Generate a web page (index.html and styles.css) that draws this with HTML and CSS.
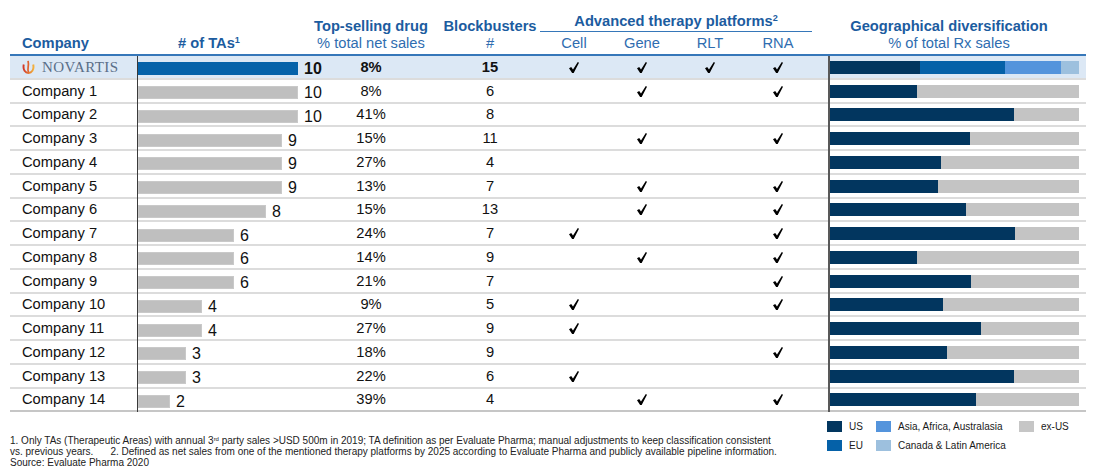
FILE: index.html
```html
<!DOCTYPE html>
<html>
<head>
<meta charset="utf-8">
<link rel="stylesheet" href="styles.css">
</head>
<body>
<div class="page">
  <div class="head cols">
    <div class="h h-company"><b>Company</b></div>
    <div class="h h-tas"><b># of TAs<sup class="sup">1</sup></b></div>
    <div class="h h-ctr"><b>Top-selling drug</b><span>% total net sales</span></div>
    <div class="h"></div>
    <div class="h h-ctr"><b>Blockbusters</b><span>#</span></div>
    <div class="h h-group">
      <b class="group-title">Advanced therapy platforms<sup class="sup">2</sup></b>
      <div class="group-cols"><span>Cell</span><span>Gene</span><span>RLT</span><span>RNA</span></div>
    </div>
    <div class="h"></div>
    <div class="h h-ctr h-geo"><b>Geographical diversification</b><span>% of total Rx sales</span></div>
  </div>

  <div class="row cols nvs">
    <div class="c name">
      <svg class="flame" viewBox="0 0 12 13" width="13" height="14">
        <defs><linearGradient id="fg" x1="0" y1="0" x2="1" y2="0"><stop offset="0" stop-color="#d23a2a"/><stop offset="1" stop-color="#f3b03c"/></linearGradient></defs>
        <path d="M1.6,4.2 C0.6,9.4 3.1,12 6,12 C8.9,12 11.4,9.4 10.4,4.2" fill="none" stroke="url(#fg)" stroke-width="1.8"/>
        <path d="M6,11.2 C4.3,8.2 6.9,6 5.6,0.8" fill="none" stroke="#e0612e" stroke-width="1.6"/>
      </svg>
      <span class="nvs-word">NOVARTIS</span>
    </div>
    <div class="c tas"><span class="bar" style="width:160px"></span><span class="num">10</span></div>
    <div class="c ctr">8%</div><div class="c"></div>
    <div class="c ctr">15</div>
    <div class="c ctr"><svg class="chk" viewBox="0 0 10 11"><polygon points="0,6.3 2.2,4.9 4,7.6 8.8,0 10,0.8 4.7,11 3.1,11"/></svg></div>
    <div class="c ctr"><svg class="chk" viewBox="0 0 10 11"><polygon points="0,6.3 2.2,4.9 4,7.6 8.8,0 10,0.8 4.7,11 3.1,11"/></svg></div>
    <div class="c ctr"><svg class="chk" viewBox="0 0 10 11"><polygon points="0,6.3 2.2,4.9 4,7.6 8.8,0 10,0.8 4.7,11 3.1,11"/></svg></div>
    <div class="c ctr"><svg class="chk" viewBox="0 0 10 11"><polygon points="0,6.3 2.2,4.9 4,7.6 8.8,0 10,0.8 4.7,11 3.1,11"/></svg></div>
    <div class="c"></div>
    <div class="c geo"><div class="gbar"><span class="us" style="width:90px"></span><span class="eu" style="width:85px"></span><span class="asia" style="width:56px"></span><span class="cala" style="width:18px"></span></div></div>
  </div>

  <div class="row cols">
    <div class="c name">Company 1</div>
    <div class="c tas"><span class="bar" style="width:160px"></span><span class="num">10</span></div>
    <div class="c ctr">8%</div><div class="c"></div>
    <div class="c ctr">6</div>
    <div class="c ctr"></div>
    <div class="c ctr"><svg class="chk" viewBox="0 0 10 11"><polygon points="0,6.3 2.2,4.9 4,7.6 8.8,0 10,0.8 4.7,11 3.1,11"/></svg></div>
    <div class="c ctr"></div>
    <div class="c ctr"><svg class="chk" viewBox="0 0 10 11"><polygon points="0,6.3 2.2,4.9 4,7.6 8.8,0 10,0.8 4.7,11 3.1,11"/></svg></div>
    <div class="c"></div>
    <div class="c geo"><div class="gbar"><span class="us" style="width:87px"></span></div></div>
  </div>

  <div class="row cols">
    <div class="c name">Company 2</div>
    <div class="c tas"><span class="bar" style="width:160px"></span><span class="num">10</span></div>
    <div class="c ctr">41%</div><div class="c"></div>
    <div class="c ctr">8</div>
    <div class="c ctr"></div><div class="c ctr"></div><div class="c ctr"></div><div class="c ctr"></div>
    <div class="c"></div>
    <div class="c geo"><div class="gbar"><span class="us" style="width:184px"></span></div></div>
  </div>

  <div class="row cols">
    <div class="c name">Company 3</div>
    <div class="c tas"><span class="bar" style="width:144px"></span><span class="num">9</span></div>
    <div class="c ctr">15%</div><div class="c"></div>
    <div class="c ctr">11</div>
    <div class="c ctr"></div>
    <div class="c ctr"><svg class="chk" viewBox="0 0 10 11"><polygon points="0,6.3 2.2,4.9 4,7.6 8.8,0 10,0.8 4.7,11 3.1,11"/></svg></div>
    <div class="c ctr"></div>
    <div class="c ctr"><svg class="chk" viewBox="0 0 10 11"><polygon points="0,6.3 2.2,4.9 4,7.6 8.8,0 10,0.8 4.7,11 3.1,11"/></svg></div>
    <div class="c"></div>
    <div class="c geo"><div class="gbar"><span class="us" style="width:140px"></span></div></div>
  </div>

  <div class="row cols">
    <div class="c name">Company 4</div>
    <div class="c tas"><span class="bar" style="width:144px"></span><span class="num">9</span></div>
    <div class="c ctr">27%</div><div class="c"></div>
    <div class="c ctr">4</div>
    <div class="c ctr"></div><div class="c ctr"></div><div class="c ctr"></div><div class="c ctr"></div>
    <div class="c"></div>
    <div class="c geo"><div class="gbar"><span class="us" style="width:111px"></span></div></div>
  </div>

  <div class="row cols">
    <div class="c name">Company 5</div>
    <div class="c tas"><span class="bar" style="width:144px"></span><span class="num">9</span></div>
    <div class="c ctr">13%</div><div class="c"></div>
    <div class="c ctr">7</div>
    <div class="c ctr"></div>
    <div class="c ctr"><svg class="chk" viewBox="0 0 10 11"><polygon points="0,6.3 2.2,4.9 4,7.6 8.8,0 10,0.8 4.7,11 3.1,11"/></svg></div>
    <div class="c ctr"></div>
    <div class="c ctr"><svg class="chk" viewBox="0 0 10 11"><polygon points="0,6.3 2.2,4.9 4,7.6 8.8,0 10,0.8 4.7,11 3.1,11"/></svg></div>
    <div class="c"></div>
    <div class="c geo"><div class="gbar"><span class="us" style="width:108px"></span></div></div>
  </div>

  <div class="row cols">
    <div class="c name">Company 6</div>
    <div class="c tas"><span class="bar" style="width:128px"></span><span class="num">8</span></div>
    <div class="c ctr">15%</div><div class="c"></div>
    <div class="c ctr">13</div>
    <div class="c ctr"></div>
    <div class="c ctr"><svg class="chk" viewBox="0 0 10 11"><polygon points="0,6.3 2.2,4.9 4,7.6 8.8,0 10,0.8 4.7,11 3.1,11"/></svg></div>
    <div class="c ctr"></div>
    <div class="c ctr"><svg class="chk" viewBox="0 0 10 11"><polygon points="0,6.3 2.2,4.9 4,7.6 8.8,0 10,0.8 4.7,11 3.1,11"/></svg></div>
    <div class="c"></div>
    <div class="c geo"><div class="gbar"><span class="us" style="width:136px"></span></div></div>
  </div>

  <div class="row cols">
    <div class="c name">Company 7</div>
    <div class="c tas"><span class="bar" style="width:96px"></span><span class="num">6</span></div>
    <div class="c ctr">24%</div><div class="c"></div>
    <div class="c ctr">7</div>
    <div class="c ctr"><svg class="chk" viewBox="0 0 10 11"><polygon points="0,6.3 2.2,4.9 4,7.6 8.8,0 10,0.8 4.7,11 3.1,11"/></svg></div>
    <div class="c ctr"></div>
    <div class="c ctr"></div>
    <div class="c ctr"><svg class="chk" viewBox="0 0 10 11"><polygon points="0,6.3 2.2,4.9 4,7.6 8.8,0 10,0.8 4.7,11 3.1,11"/></svg></div>
    <div class="c"></div>
    <div class="c geo"><div class="gbar"><span class="us" style="width:185px"></span></div></div>
  </div>

  <div class="row cols">
    <div class="c name">Company 8</div>
    <div class="c tas"><span class="bar" style="width:96px"></span><span class="num">6</span></div>
    <div class="c ctr">14%</div><div class="c"></div>
    <div class="c ctr">9</div>
    <div class="c ctr"></div>
    <div class="c ctr"><svg class="chk" viewBox="0 0 10 11"><polygon points="0,6.3 2.2,4.9 4,7.6 8.8,0 10,0.8 4.7,11 3.1,11"/></svg></div>
    <div class="c ctr"></div>
    <div class="c ctr"><svg class="chk" viewBox="0 0 10 11"><polygon points="0,6.3 2.2,4.9 4,7.6 8.8,0 10,0.8 4.7,11 3.1,11"/></svg></div>
    <div class="c"></div>
    <div class="c geo"><div class="gbar"><span class="us" style="width:87px"></span></div></div>
  </div>

  <div class="row cols">
    <div class="c name">Company 9</div>
    <div class="c tas"><span class="bar" style="width:96px"></span><span class="num">6</span></div>
    <div class="c ctr">21%</div><div class="c"></div>
    <div class="c ctr">7</div>
    <div class="c ctr"></div><div class="c ctr"></div><div class="c ctr"></div>
    <div class="c ctr"><svg class="chk" viewBox="0 0 10 11"><polygon points="0,6.3 2.2,4.9 4,7.6 8.8,0 10,0.8 4.7,11 3.1,11"/></svg></div>
    <div class="c"></div>
    <div class="c geo"><div class="gbar"><span class="us" style="width:141px"></span></div></div>
  </div>

  <div class="row cols">
    <div class="c name">Company 10</div>
    <div class="c tas"><span class="bar" style="width:64px"></span><span class="num">4</span></div>
    <div class="c ctr">9%</div><div class="c"></div>
    <div class="c ctr">5</div>
    <div class="c ctr"><svg class="chk" viewBox="0 0 10 11"><polygon points="0,6.3 2.2,4.9 4,7.6 8.8,0 10,0.8 4.7,11 3.1,11"/></svg></div>
    <div class="c ctr"></div><div class="c ctr"></div>
    <div class="c ctr"><svg class="chk" viewBox="0 0 10 11"><polygon points="0,6.3 2.2,4.9 4,7.6 8.8,0 10,0.8 4.7,11 3.1,11"/></svg></div>
    <div class="c"></div>
    <div class="c geo"><div class="gbar"><span class="us" style="width:113px"></span></div></div>
  </div>

  <div class="row cols">
    <div class="c name">Company 11</div>
    <div class="c tas"><span class="bar" style="width:64px"></span><span class="num">4</span></div>
    <div class="c ctr">27%</div><div class="c"></div>
    <div class="c ctr">9</div>
    <div class="c ctr"><svg class="chk" viewBox="0 0 10 11"><polygon points="0,6.3 2.2,4.9 4,7.6 8.8,0 10,0.8 4.7,11 3.1,11"/></svg></div>
    <div class="c ctr"></div><div class="c ctr"></div><div class="c ctr"></div>
    <div class="c"></div>
    <div class="c geo"><div class="gbar"><span class="us" style="width:151px"></span></div></div>
  </div>

  <div class="row cols">
    <div class="c name">Company 12</div>
    <div class="c tas"><span class="bar" style="width:48px"></span><span class="num">3</span></div>
    <div class="c ctr">18%</div><div class="c"></div>
    <div class="c ctr">9</div>
    <div class="c ctr"></div><div class="c ctr"></div><div class="c ctr"></div>
    <div class="c ctr"><svg class="chk" viewBox="0 0 10 11"><polygon points="0,6.3 2.2,4.9 4,7.6 8.8,0 10,0.8 4.7,11 3.1,11"/></svg></div>
    <div class="c"></div>
    <div class="c geo"><div class="gbar"><span class="us" style="width:117px"></span></div></div>
  </div>

  <div class="row cols">
    <div class="c name">Company 13</div>
    <div class="c tas"><span class="bar" style="width:48px"></span><span class="num">3</span></div>
    <div class="c ctr">22%</div><div class="c"></div>
    <div class="c ctr">6</div>
    <div class="c ctr"><svg class="chk" viewBox="0 0 10 11"><polygon points="0,6.3 2.2,4.9 4,7.6 8.8,0 10,0.8 4.7,11 3.1,11"/></svg></div>
    <div class="c ctr"></div><div class="c ctr"></div><div class="c ctr"></div>
    <div class="c"></div>
    <div class="c geo"><div class="gbar"><span class="us" style="width:184px"></span></div></div>
  </div>

  <div class="row cols last">
    <div class="c name">Company 14</div>
    <div class="c tas"><span class="bar" style="width:32px"></span><span class="num">2</span></div>
    <div class="c ctr">39%</div><div class="c"></div>
    <div class="c ctr">4</div>
    <div class="c ctr"></div>
    <div class="c ctr"><svg class="chk" viewBox="0 0 10 11"><polygon points="0,6.3 2.2,4.9 4,7.6 8.8,0 10,0.8 4.7,11 3.1,11"/></svg></div>
    <div class="c ctr"></div>
    <div class="c ctr"><svg class="chk" viewBox="0 0 10 11"><polygon points="0,6.3 2.2,4.9 4,7.6 8.8,0 10,0.8 4.7,11 3.1,11"/></svg></div>
    <div class="c"></div>
    <div class="c geo"><div class="gbar"><span class="us" style="width:146px"></span></div></div>
  </div>

  <div class="foot">
    <div class="notes">
      <p>1. Only TAs (Therapeutic Areas) with annual 3<sup class="fsup">rd</sup> party sales &gt;USD 500m in 2019; TA definition as per Evaluate Pharma; manual adjustments to keep classification consistent</p>
      <p>vs. previous years.<span class="note2">2. Defined as net sales from one of the mentioned therapy platforms by 2025 according to Evaluate Pharma and publicly available pipeline information.</span></p>
      <p class="source">Source: Evaluate Pharma 2020</p>
    </div>
    <div class="legend">
      <div class="li"><span class="sw us"></span>US</div>
      <div class="li"><span class="sw asia"></span>Asia, Africa, Australasia</div>
      <div class="li"><span class="sw exus"></span>ex-US</div>
      <div class="li"><span class="sw eu"></span>EU</div>
      <div class="li"><span class="sw cala"></span>Canada &amp; Latin America</div>
    </div>
  </div>
</div>
</body>
</html>
```
FILE: styles.css
```css
html, body {
  margin: 0;
  padding: 0;
  background: #fff;
}
body {
  font-family: "Liberation Sans", Arial, sans-serif;
  color: #111;
}
.page {
  width: 1099px;
  height: 473px;
  padding: 0 13px 0 10px;
  box-sizing: border-box;
  overflow: hidden;
}
.cols {
  display: grid;
  grid-template-columns: 127px 196px 76px 31px 100px 68px 68px 68px 68px 16px 258px;
}

/* header */
.head {
  height: 54px;
  border-bottom: 2px solid #3677b9;
  align-items: end;
  font-size: 14.7px;
  line-height: 17px;
}
.h {
  padding-bottom: 2.5px;
  white-space: nowrap;
}
.h b { color: #1c5c9f; font-weight: bold; }
.h span { color: #2f6db0; }
.h-company { padding-left: 12px; }
.h-tas { padding-left: 41px; }
.h-ctr {
  display: flex;
  flex-direction: column;
  align-items: center;
}
.h-geo { padding-right: 16px; }
.sup {
  font-size: 0.62em;
  vertical-align: 0.55em;
  line-height: 0;
}
.h-group {
  grid-column: span 4;
  display: flex;
  flex-direction: column;
}
.group-title {
  text-align: center;
  padding-bottom: 1px;
  border-bottom: 1.5px solid #3677b9;
  margin-bottom: 2.5px;
}
.group-cols {
  display: grid;
  grid-template-columns: repeat(4, 68px);
}
.group-cols span { text-align: center; }

/* rows */
.row {
  height: 21.76px;
  border-bottom: 2px solid #dcdcdc;
  font-size: 14.7px;
}
.row.last { border-bottom-color: #c6c6c6; }
.row.nvs { background: #dce8f5; }
.c {
  display: flex;
  align-items: center;
  white-space: nowrap;
}
.ctr { justify-content: center; }
.name { padding-left: 12px; }
.nvs .ctr, .nvs .num { font-weight: bold; }
.tas {
  border-left: 1px solid #3a3a3a;
  margin-bottom: -2px;
  padding-top: 1px;
}
.bar {
  display: block;
  height: 13px;
  background: #bfbfbf;
  box-shadow: inset 0 0 0 1px #c9c9c9;
  margin-top: 1px;
}
.nvs .bar { background: #0562a9; box-shadow: none; }
.num {
  font-size: 16px;
  margin-left: 6px;
  margin-top: 2px;
}
.chk {
  width: 10px;
  height: 11px;
  fill: #000;
  margin-top: 1px;
}
.flame { margin-right: 7px; margin-top: 1px; }
.nvs-word {
  font-family: "Liberation Serif", "Times New Roman", serif;
  font-size: 15px;
  letter-spacing: 0.45px;
  color: #5a6e88;
  margin-top: 2px;
}
.geo {
  border-left: 2px solid #595959;
  margin-bottom: -2px;
  padding-bottom: 1px;
}
.gbar {
  display: flex;
  width: 249px;
  height: 13px;
  background: #c4c4c4;
}
.gbar span { display: block; height: 100%; }
.us { background: #02365f; }
.eu { background: #0561a8; }
.asia { background: #5494dc; }
.cala { background: #9dc0de; }
.exus { background: #c6c6c6; }

/* footer */
.foot {
  display: flex;
  align-items: flex-start;
}
.notes {
  width: 817px;
  margin-top: 23px;
  font-size: 10px;
  line-height: 11px;
  color: #222;
}
.notes p { margin: 0; white-space: nowrap; }
.note2 { margin-left: 17px; }
.fsup { font-size: 0.6em; vertical-align: 0.5em; line-height: 0; }
.source { margin-top: 2.5px; }
.legend {
  margin-top: 8.5px;
  display: grid;
  grid-template-columns: 49px 143px auto;
  row-gap: 8px;
  font-size: 10px;
  line-height: 11px;
  color: #1a1a1a;
}
.li {
  display: flex;
  align-items: center;
  gap: 7px;
  white-space: nowrap;
}
.sw {
  display: block;
  width: 15px;
  height: 11px;
}
```
